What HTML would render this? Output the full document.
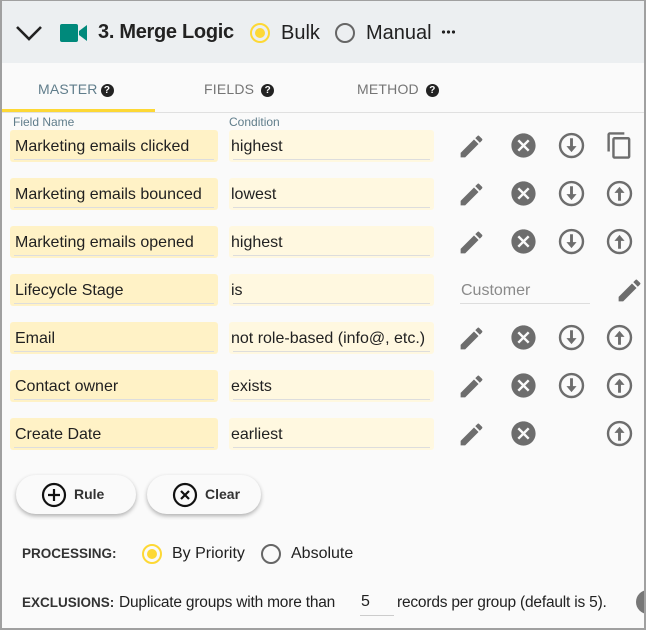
<!DOCTYPE html><html><head><style>
*{box-sizing:border-box;margin:0;padding:0}
body{width:646px;height:630px;overflow:hidden;background:#fafafa;font-family:"Liberation Sans",Roboto,sans-serif;color:#212121;position:relative}
.frame{position:absolute;inset:0;border:2px solid #a0a0a0;border-top-width:1px;pointer-events:none;z-index:9}
.hdr{position:absolute;left:0;top:0;width:646px;height:63px;background:#eceff1}
.abs{position:absolute}
.tab{position:absolute;top:81px;font-size:14px;color:#757575;letter-spacing:.2px}
.q{display:inline-block;width:13px;height:13px;border-radius:50%;background:#222;color:#fff;font-size:10px;font-weight:bold;text-align:center;line-height:13px;vertical-align:1px;margin-left:3px}
.fld{position:absolute;left:10px;width:208px;height:32px;background:#fff2c6;border-radius:3px;font-size:16px;padding:8px 5px}
.cnd{position:absolute;left:229px;width:205px;height:32px;background:#fff8e0;border-radius:3px;font-size:16px;padding:8px 2px}
.fld:after,.cnd:after{content:"";position:absolute;left:4px;right:4px;bottom:2px;height:1px;background:#ddd}
.lbl{position:absolute;top:115px;font-size:12px;color:#607d8b}
svg.i{position:absolute;width:29px;height:29px;fill:#6d6d6d}
.btn{position:absolute;top:475px;height:39px;border-radius:20px;background:#fafafa;box-shadow:0 2px 4px rgba(0,0,0,.3);font-size:14px;font-weight:bold;color:#333}
.radio{position:absolute;width:20px;height:20px;border-radius:50%;border:2px solid #666}
.radio.on{border-color:#fdd835}
.radio.on:after{content:"";position:absolute;left:3px;top:3px;width:10px;height:10px;border-radius:50%;background:#fdd835}
</style></head><body>
<div class="hdr"></div>
<svg class="abs" style="left:15px;top:23px" width="28" height="20" viewBox="0 0 28 20"><path d="M2 4 L14 16 L26 4" fill="none" stroke="#222" stroke-width="2.6"/></svg>
<svg class="abs" style="left:60px;top:23px" width="28" height="20" viewBox="0 0 28 20"><rect x="0" y="1" width="18" height="18" rx="2" fill="#00897b"/><path d="M19 8 L27 2 V18 L19 12Z" fill="#00897b"/></svg>
<div class="abs" style="left:98px;top:21px;font-size:20px;font-weight:bold;color:#222;letter-spacing:-.3px">3. Merge Logic</div>
<div class="radio on" style="left:250px;top:23px"></div>
<div class="abs" style="left:281px;top:22px;font-size:20px">Bulk</div>
<div class="radio" style="left:335px;top:23px"></div>
<div class="abs" style="left:366px;top:22px;font-size:20px">Manual</div>
<div class="abs" style="left:441px;top:30px;width:14px;height:4px;background:radial-gradient(circle,#222 1.6px,transparent 1.8px) 0 0/5px 4px repeat-x"></div>

<div class="tab" style="left:38px;color:#607d8b">MASTER<span class="q">?</span></div>
<div class="tab" style="left:204px">FIELDS <span class="q">?</span></div>
<div class="tab" style="left:357px">METHOD <span class="q">?</span></div>
<div class="abs" style="left:0;top:112px;width:646px;height:1px;background:#e0e0e0"></div>
<div class="abs" style="left:1px;top:109px;width:154px;height:3px;background:#fdd835"></div>
<div class="lbl" style="left:13px">Field Name</div>
<div class="lbl" style="left:229px">Condition</div>

<div class="fld" style="top:130px">Marketing emails clicked</div><div class="cnd" style="top:130px">highest</div>
<div class="fld" style="top:178px">Marketing emails bounced</div><div class="cnd" style="top:178px">lowest</div>
<div class="fld" style="top:226px">Marketing emails opened</div><div class="cnd" style="top:226px">highest</div>
<div class="fld" style="top:274px">Lifecycle Stage</div><div class="cnd" style="top:274px">is</div>
<div class="fld" style="top:322px">Email</div><div class="cnd" style="top:322px">not role-based (info@, etc.)</div>
<div class="fld" style="top:370px">Contact owner</div><div class="cnd" style="top:370px">exists</div>
<div class="fld" style="top:418px">Create Date</div><div class="cnd" style="top:418px">earliest</div>

<div class="abs" style="left:461px;top:282px;font-size:16px;color:#8a8a8a">Customer</div>
<div class="abs" style="left:460px;top:303px;width:130px;height:1px;background:#ddd"></div>

<svg width="0" height="0" style="position:absolute"><defs>
<symbol id="pen" viewBox="0 0 24 24"><path d="M3 17.25V21h3.75L17.81 9.94l-3.75-3.75L3 17.25zM20.71 7.04a1 1 0 0 0 0-1.41l-2.34-2.34a1 1 0 0 0-1.41 0l-1.83 1.83 3.75 3.75 1.83-1.83z"/></symbol>
<symbol id="x" viewBox="0 0 24 24"><path d="M12 2C6.47 2 2 6.470 2 12s4.47 10 10 10 10-4.47 10-10S17.53 2 12 2zm5 13.59L15.59 17 12 13.41 8.41 17 7 15.59 10.59 12 7 8.41 8.41 7 12 10.59 15.59 7 17 8.41 13.41 12 17 15.59z"/></symbol>
<symbol id="dn" viewBox="0 0 24 24"><circle cx="12" cy="12" r="9.5" fill="none" stroke="#6d6d6d" stroke-width="2"/><path d="M10.8 6h2.4v6.5h3l-4.2 5-4.2-5h3z"/></symbol>
<symbol id="up" viewBox="0 0 24 24"><circle cx="12" cy="12" r="9.5" fill="none" stroke="#6d6d6d" stroke-width="2"/><path d="M10.8 18h2.4v-6.5h3l-4.2-5-4.2 5h3z"/></symbol>
<symbol id="cp" viewBox="0 0 24 24"><path d="M16 1H4c-1.1 0-2 .9-2 2v14h2V3h12V1zm3 4H8c-1.1 0-2 .9-2 2v14c0 1.1.9 2 2 2h11c1.1 0 2-.9 2-2V7c0-1.1-.9-2-2-2zm0 16H8V7h11v14z"/></symbol>
</defs></svg>

<svg class="i" style="left:457px;top:132px"><use href="#pen"/></svg><svg class="i" style="left:509px;top:131px"><use href="#x"/></svg><svg class="i" style="left:557px;top:131px"><use href="#dn"/></svg><svg class="i" style="left:605px;top:131px"><use href="#cp"/></svg>
<svg class="i" style="left:457px;top:180px"><use href="#pen"/></svg><svg class="i" style="left:509px;top:179px"><use href="#x"/></svg><svg class="i" style="left:557px;top:179px"><use href="#dn"/></svg><svg class="i" style="left:605px;top:179px"><use href="#up"/></svg>
<svg class="i" style="left:457px;top:228px"><use href="#pen"/></svg><svg class="i" style="left:509px;top:227px"><use href="#x"/></svg><svg class="i" style="left:557px;top:227px"><use href="#dn"/></svg><svg class="i" style="left:605px;top:227px"><use href="#up"/></svg>
<svg class="i" style="left:615px;top:276px"><use href="#pen"/></svg>
<svg class="i" style="left:457px;top:324px"><use href="#pen"/></svg><svg class="i" style="left:509px;top:323px"><use href="#x"/></svg><svg class="i" style="left:557px;top:323px"><use href="#dn"/></svg><svg class="i" style="left:605px;top:323px"><use href="#up"/></svg>
<svg class="i" style="left:457px;top:372px"><use href="#pen"/></svg><svg class="i" style="left:509px;top:371px"><use href="#x"/></svg><svg class="i" style="left:557px;top:371px"><use href="#dn"/></svg><svg class="i" style="left:605px;top:371px"><use href="#up"/></svg>
<svg class="i" style="left:457px;top:420px"><use href="#pen"/></svg><svg class="i" style="left:509px;top:419px"><use href="#x"/></svg><svg class="i" style="left:605px;top:419px"><use href="#up"/></svg>

<div class="btn" style="left:16px;width:120px"><svg class="abs" style="left:25px;top:7px" width="26" height="26" viewBox="0 0 26 26"><circle cx="13" cy="13" r="11" fill="none" stroke="#111" stroke-width="2.2"/><path d="M13 7v12M7 13h12" stroke="#111" stroke-width="2.2"/></svg><span class="abs" style="left:58px;top:11px">Rule</span></div>
<div class="btn" style="left:147px;width:114px"><svg class="abs" style="left:25px;top:7px" width="26" height="26" viewBox="0 0 26 26"><circle cx="13" cy="13" r="11" fill="none" stroke="#111" stroke-width="2.2"/><path d="M9 9l8 8M17 9l-8 8" stroke="#111" stroke-width="2.2"/></svg><span class="abs" style="left:58px;top:11px">Clear</span></div>

<div class="abs" style="left:22px;top:546px;font-size:13.5px;font-weight:bold;color:#333">PROCESSING:</div>
<div class="radio on" style="left:142px;top:544px"></div>
<div class="abs" style="left:172px;top:545px;font-size:16px">By Priority</div>
<div class="radio" style="left:261px;top:544px"></div>
<div class="abs" style="left:291px;top:545px;font-size:16px">Absolute</div>

<div class="abs" style="left:22px;top:595px;font-size:13.5px;font-weight:bold;color:#333">EXCLUSIONS:</div>
<div class="abs" style="left:119px;top:594px;font-size:15.5px;letter-spacing:-.2px">Duplicate groups with more than</div>
<div class="abs" style="left:361px;top:593px;font-size:16px">5</div>
<div class="abs" style="left:360px;top:615px;width:34px;height:1px;background:#ccc"></div>
<div class="abs" style="left:397px;top:594px;font-size:15.5px;letter-spacing:-.2px">records per group (default is 5).</div>
<div class="abs" style="left:636px;top:590px;width:24px;height:24px;border-radius:50%;background:#777"></div>
<div class="frame"></div>
</body></html>
